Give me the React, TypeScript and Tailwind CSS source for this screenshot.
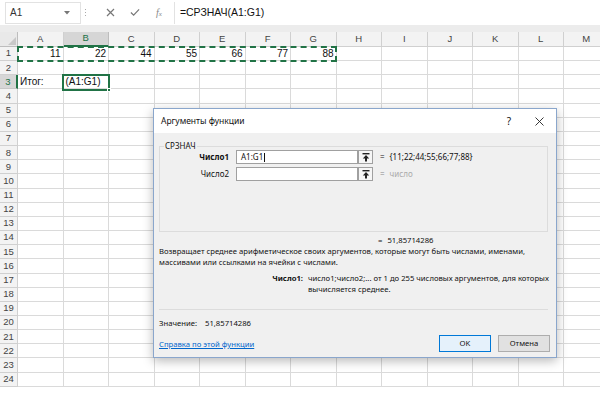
import React from "react";

const COLS = ["A", "B", "C", "D", "E", "F", "G", "H", "I", "J", "K", "L", "M"];
const ROW1: Record<string, string> = { A: "11", B: "22", C: "44", D: "55", E: "66", F: "77", G: "88" };

function UpBtn() {
  return (
    <div className="w-[15px] h-[14px] border border-[#a0a0a0] bg-[#f6f6f6] flex items-center justify-center">
      <svg width="8" height="9" viewBox="0 0 8 9">
        <rect x="0.5" y="0" width="7" height="1.4" fill="#222" />
        <path d="M4 2 L7.2 5.4 L5 5.4 L5 8.6 L3 8.6 L3 5.4 L0.8 5.4 Z" fill="#222" />
      </svg>
    </div>
  );
}

export default function App() {
  return (
    <div className="relative w-[600px] h-[408px] bg-white overflow-hidden font-['Liberation_Sans',sans-serif] text-[#222]">
      {/* formula bar */}
      <div className="h-[25px] bg-white flex items-center">
        <div className="ml-[5px] w-[76px] h-[22px] bg-white border border-[#e2e2e2] flex items-center justify-between px-[4px]">
          <span className="text-[10px] text-[#333]">A1</span>
          <svg width="6" height="4" viewBox="0 0 6 4" className="mr-[6px]"><path d="M0 0 L6 0 L3 3.5 Z" fill="#777" /></svg>
        </div>
        <div className="ml-[4px] flex flex-col gap-[2px]">
          <div className="w-[1px] h-[1px] bg-[#aaa]" />
          <div className="w-[1px] h-[1px] bg-[#aaa]" />
          <div className="w-[1px] h-[1px] bg-[#aaa]" />
        </div>
        <div className="ml-[19px] w-[10px] flex justify-center">
          <svg width="9" height="9" viewBox="0 0 9 9"><path d="M1 1 L8 8 M8 1 L1 8" stroke="#777" strokeWidth="1.2" /></svg>
        </div>
        <div className="ml-[15px] w-[10px] flex justify-center">
          <svg width="11" height="9" viewBox="0 0 11 9"><path d="M1 4.5 L4 7.5 L10 1" stroke="#777" strokeWidth="1.3" fill="none" /></svg>
        </div>
        <div className="ml-[16px] text-[10px] italic text-[#888] font-['Liberation_Serif',serif]">
          f<span className="text-[7px]">x</span>
        </div>
        <div className="ml-[12px] flex-1 h-[22px] bg-white border-l border-[#e2e2e2] flex items-center pl-[5px]">
          <span className="text-[10.5px] text-[#111]">=СРЗНАЧ(A1:G1)</span>
        </div>
      </div>
      <div className="h-[7px] bg-[#ececec]" />

      {/* grid */}
      <div className="grid grid-cols-[18px_repeat(13,45.5px)] w-[609.5px]">
        <div className="h-[15px] bg-[#e9e9e9] border-r border-b border-[#bdbdbd] flex items-end justify-end">
          <svg width="8" height="8" viewBox="0 0 8 8" className="mr-[1px] mb-[1px]"><path d="M8 0 L8 8 L0 8 Z" fill="#c8c8c8" /></svg>
        </div>
        {COLS.map((c) => (
          <div
            key={c}
            className={
              c === "B"
                ? "h-[15px] bg-[#d6d6d6] border-r border-[#bdbdbd] border-b-2 border-b-[#217346] flex items-center justify-center text-[9.5px] text-[#217346]"
                : "h-[15px] bg-[#f3f3f3] border-r border-b border-[#d0d0d0] flex items-center justify-center text-[9.5px] text-[#444]"
            }
          >
            {c}
          </div>
        ))}
        {Array.from({ length: 24 }, (_, i) => i + 1).map((r) => (
          <React.Fragment key={r}>
            <div
              className={
                r === 3
                  ? "h-[14.17px] bg-[#d6d6d6] border-r-2 border-r-[#217346] border-b border-b-[#c6c6c6] flex items-center justify-center text-[9.5px] text-[#217346]"
                  : "h-[14.17px] bg-[#f3f3f3] border-r border-b border-[#d0d0d0] flex items-center justify-center text-[9.5px] text-[#444]"
              }
            >
              {r}
            </div>
            {COLS.map((c) => (
              <div
                key={c}
                className="h-[14.17px] border-r border-b border-[#dadada] flex items-center text-[10px] text-[#111] px-[2px] overflow-hidden whitespace-nowrap"
              >
                {r === 1 && ROW1[c] ? <span className="ml-auto">{ROW1[c]}</span> : null}
                {r === 3 && c === "A" ? <span>Итог:</span> : null}
                {r === 3 && c === "B" ? <span>(A1:G1)</span> : null}
              </div>
            ))}
          </React.Fragment>
        ))}
      </div>

      {/* copy marquee A1:G1 */}
      <div className="absolute left-[17px] top-[46px] w-[320px] h-[16px] border-2 border-dashed border-[#217346]" />
      {/* active cell B3 */}
      <div className="absolute left-[62px] top-[74px] w-[48px] h-[17px] border-2 border-[#217346]">
        <div className="absolute -right-[3px] -bottom-[3px] w-[4px] h-[4px] bg-[#217346] border border-white" />
      </div>

      {/* dialog */}
      <div className="absolute left-[153px] top-[108px] w-[404px] h-[250px] border border-[#8aa6cc] shadow-[0_3px_10px_rgba(0,0,0,0.28)] flex flex-col font-['Noto_Sans',sans-serif] text-[7.7px] text-[#111]">
        <div className="h-[24px] bg-white flex items-center pl-[7px] shrink-0">
          <span className="text-[8.5px]">Аргументы функции</span>
          <span className="ml-auto mr-[24px] text-[10px]">?</span>
          <svg width="9" height="9" viewBox="0 0 9 9" className="mr-[12px]"><path d="M0.5 0.5 L8.5 8.5 M8.5 0.5 L0.5 8.5" stroke="#222" strokeWidth="0.9" /></svg>
        </div>
        <div className="flex-1 bg-[#f0f0f0] px-[5px] pb-[5px] flex flex-col">
          {/* group */}
          <div className="relative mt-[13px] h-[86px] border border-[#dcdcdc] mr-[3px]">
            <span className="absolute left-[4px] -top-[7px] bg-[#f0f0f0] px-[1px] leading-[12px] text-[8px]">СРЗНАЧ</span>
            <div className="mt-[3px] flex items-center h-[14px] text-[8px]">
              <span className="w-[69px] text-right font-bold">Число1</span>
              <div className="ml-[7px] w-[122px] h-[14px] bg-white border border-[#a0a0a0] flex items-center pl-[4px]">
                <span>A1:G1</span>
                <span className="w-[1px] h-[9px] bg-[#111] ml-[1px]" />
              </div>
              <UpBtn />
              <span className="ml-[7px]">=</span>
              <span className="ml-[5px]">{"{11;22;44;55;66;77;88}"}</span>
            </div>
            <div className="mt-[3px] flex items-center h-[14px] text-[8px]">
              <span className="w-[69px] text-right">Число2</span>
              <div className="ml-[7px] w-[122px] h-[14px] bg-white border border-[#a0a0a0]" />
              <UpBtn />
              <span className="ml-[7px] text-[#888]">=</span>
              <span className="ml-[5px] text-[#aaa]">число</span>
            </div>
          </div>
          <div className="mt-[3px] h-[11px] flex items-center pl-[219px]">
            <span>=</span>
            <span className="ml-[5px]">51,85714286</span>
          </div>
          <div className="leading-[11px] whitespace-nowrap">
            Возвращает среднее арифметическое своих аргументов, которые могут быть числами, именами,
            <br />
            массивами или ссылками на ячейки с числами.
          </div>
          <div className="mt-[5px] flex leading-[11px] whitespace-nowrap">
            <span className="w-[144px] text-right font-bold">Число1:</span>
            <span className="ml-[5px]">
              число1;число2;... от 1 до 255 числовых аргументов, для которых
              <br />
              вычисляется среднее.
            </span>
          </div>
          <div className="mt-[14px] h-[1px] bg-[#dcdcdc] mr-[3px]" />
          <div className="mt-[8px] leading-[11px]">
            Значение:<span className="ml-[8px]">51,85714286</span>
          </div>
          <div className="mt-auto flex items-center">
            <span className="text-[#0066cc] underline leading-[11px] mt-[2px]">Справка по этой функции</span>
            <div className="ml-auto mr-[1px] flex gap-[7px]">
              <div className="w-[52px] h-[17px] border border-[#0078d7] bg-[#e5f1fb] flex items-center justify-center">
                OK
              </div>
              <div className="w-[52px] h-[17px] border border-[#adadad] bg-[#e1e1e1] flex items-center justify-center">
                Отмена
              </div>
            </div>
          </div>
        </div>
      </div>
    </div>
  );
}
